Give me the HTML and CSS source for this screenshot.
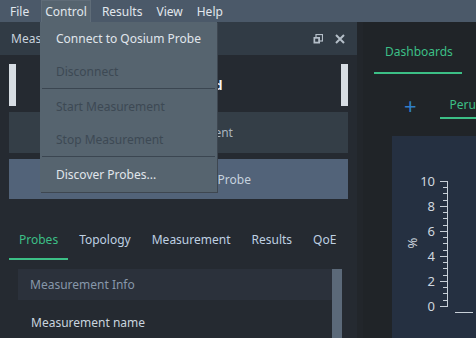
FILE: index.html
```html
<!DOCTYPE html>
<html lang="en">
  <head>
    <meta charset="UTF-8" />
    <title>Qosium Scope</title>
    <link rel="stylesheet" href="styles.css">
  </head>
  <body>
    <div class="menubar">
      <span class="menu-item">File</span>
      <span class="menu-item open">Control</span>
      <span class="menu-item">Results</span>
      <span class="menu-item">View</span>
      <span class="menu-item">Help</span>
    </div>

    <div class="main">
      <!-- Left dock -->
      <div class="dock">
        <div class="dock-title">
          <span class="dock-name">Measurement Control</span>
          <span class="dock-icons">
            <svg width="10" height="10" viewBox="0 0 10 10">
              <rect x="3" y="0.5" width="6.5" height="6.5" fill="none" stroke="#b4bec8" stroke-width="1.2" />
              <rect x="0.5" y="3" width="6.5" height="6.5" fill="#b4bec8" />
              <rect x="2.2" y="4.7" width="3" height="3" fill="#313b45" />
            </svg>
            <svg width="10" height="10" viewBox="0 0 10 10">
              <path d="M1 1 L9 9 M9 1 L1 9" stroke="#b4bec8" stroke-width="2" />
            </svg>
          </span>
        </div>
        <div class="dock-body">
          <div class="status-row">
            <span class="status-bar"></span>
            <span class="status-text">Disconnected</span>
            <span class="status-bar"></span>
          </div>
          <button class="dock-btn">Start Measurement</button>
          <button class="dock-btn primary">Connect to Qosium Probe</button>

          <div class="tabs">
            <span class="tab active">Probes</span>
            <span class="tab">Topology</span>
            <span class="tab">Measurement</span>
            <span class="tab">Results</span>
            <span class="tab">QoE</span>
          </div>
          <div class="tab-page">
            <div class="group">
              <div class="group-head">Measurement Info</div>
              <div class="group-row">Measurement name</div>
            </div>
            <div class="scrollbar"></div>
          </div>
        </div>
      </div>

      <!-- Right area -->
      <div class="workspace">
        <div class="top-tabs">
          <span class="top-tab">Dashboards</span>
        </div>
        <div class="sub-tabs">
          <span class="add-tab">+</span>
          <span class="sub-tab">Peru</span>
        </div>
        <div class="chart">
          <svg width="81" height="202" viewBox="0 0 81 202">
            <g fill="#cfd7df" font-family="Noto Sans, sans-serif" font-size="13" text-anchor="end">
              <text x="43" y="50">10</text>
              <text x="43" y="75">8</text>
              <text x="43" y="100">6</text>
              <text x="43" y="125">4</text>
              <text x="43" y="150">2</text>
              <text x="43" y="175">0</text>
              <text x="0" y="0" text-anchor="middle" transform="translate(25 107) rotate(-90)">%</text>
            </g>
            <g stroke="#c8d0d8" stroke-width="1">
              <path d="M55.5 45 V170.5" />
              <path d="M48 45.5 H56 M48 70.5 H56 M48 95.5 H56 M48 120.5 H56 M48 145.5 H56 M48 170.5 H56" />
              <path d="M51 51.5 H56 M51 57.5 H56 M51 64.5 H56
                       M51 76.5 H56 M51 82.5 H56 M51 89.5 H56
                       M51 101.5 H56 M51 107.5 H56 M51 114.5 H56
                       M51 126.5 H56 M51 132.5 H56 M51 139.5 H56
                       M51 151.5 H56 M51 157.5 H56 M51 164.5 H56" />
              <path d="M63 176.5 H81" />
            </g>
          </svg>
        </div>
      </div>
    </div>

    <!-- Open Control menu -->
    <div class="dropdown">
      <div class="drop-item">Connect to Qosium Probe</div>
      <div class="drop-item disabled">Disconnect</div>
      <div class="drop-sep"></div>
      <div class="drop-item disabled">Start Measurement</div>
      <div class="drop-item disabled">Stop Measurement</div>
      <div class="drop-sep"></div>
      <div class="drop-item">Discover Probes...</div>
    </div>
  </body>
</html>
```

FILE: styles.css
```css
/* Global */
* {
  box-sizing: border-box;
  margin: 0;
  padding: 0;
}
body {
  width: 476px;
  height: 338px;
  overflow: hidden;
  position: relative;
  background: #202428;
  font-family: "Noto Sans", sans-serif;
  font-size: 12px;
  color: #dfe5eb;
}

/* Menu bar */
.menubar {
  height: 22px;
  background: #4b5969;
  display: flex;
  align-items: stretch;
  padding-left: 4px;
}
.menu-item {
  display: flex;
  align-items: center;
  padding: 0 6px;
  margin-right: 2px;
  color: #e1e7ed;
}
.menu-item.open {
  background: #56646f;
  border: 1px solid #5f6c78;
  border-bottom: none;
  padding: 0 3px;
  margin: 0 5px 0 4px;
}

/* Layout */
.main {
  display: flex;
  height: 316px;
}

/* Dock */
.dock {
  width: 360px;
  background: #252a31;
  display: flex;
  flex-direction: column;
  overflow: hidden;
}
.dock-title {
  height: 33px;
  flex-shrink: 0;
  background: #313b45;
  display: flex;
  align-items: center;
  justify-content: space-between;
  padding: 0 12px 0 11px;
  color: #c8d2dc;
}
.dock-icons {
  display: flex;
  gap: 12px;
  align-items: center;
}
.dock-body {
  padding: 9px 9px 0 9px;
  display: flex;
  flex-direction: column;
  flex-shrink: 0;
}
.dock-body > * {
  flex-shrink: 0;
}
.status-row {
  height: 42px;
  display: flex;
  align-items: center;
  justify-content: space-between;
}
.status-bar {
  width: 7px;
  height: 42px;
  background: #d7dde3;
}
.status-text {
  font-weight: bold;
  font-size: 13px;
  color: #f2f4f6;
}
.dock-btn {
  height: 41px;
  margin-top: 6px;
  border: none;
  background: #343e47;
  color: #a9b4bf;
  font-family: inherit;
  font-size: 12px;
}
.dock-btn.primary {
  height: 40px;
  background: #526379;
  color: #c6d2de;
}

/* Inner tabs */
.tabs {
  display: flex;
  margin-top: 22px;
  height: 39px;
}
.tab {
  padding: 10px 10px 0 10px;
  margin-right: 1px;
  color: #bfd0e2;
}
.tab.active {
  color: #3cbf86;
  border-bottom: 2px solid #3cbf86;
}
.tab-page {
  display: flex;
  padding: 9px 0 0 9px;
}
.group {
  width: 314px;
}
.group-head {
  height: 31px;
  background: #2b313b;
  padding: 7px 12px;
  color: #8797aa;
}
.group-row {
  padding: 14px 13px;
  color: #c9d4df;
}
.scrollbar {
  width: 10px;
  height: 80px;
  background: #5b6979;
}

/* Workspace */
.workspace {
  flex: 1;
  display: flex;
  flex-direction: column;
  background: #202428;
  border-left: 6px solid #22262b;
}
.top-tabs {
  height: 52px;
  padding-left: 11px;
  display: flex;
}
.top-tab {
  width: 88px;
  padding: 21px 0 0 11px;
  color: #3cbf86;
  border-bottom: 2px solid #3cbf86;
}
.sub-tabs {
  height: 52px;
  display: flex;
  align-items: flex-start;
}
.add-tab {
  color: #2f7fc9;
  font-size: 22px;
  line-height: 1;
  margin: 20px 0 0 41px;
}
.sub-tab {
  margin: 22px 0 0 23px;
  padding: 0 0 4px 10px;
  flex: 1;
  color: #3cbf86;
  border-bottom: 2px solid #3cbf86;
}
.chart {
  flex: 1;
  margin: 10px 0 0 29px;
  background: #253041;
}
.chart svg {
  display: block;
}

/* Dropdown menu (overlays the dock) */
.dropdown {
  position: absolute;
  left: 40px;
  top: 22px;
  width: 177px;
  background: #56646f;
  box-shadow: 1px 1px 0 #3e4751;
  padding-bottom: 1px;
}
.drop-item {
  height: 33px;
  line-height: 33px;
  padding-left: 16px;
  color: #e0e6ec;
}
.drop-item.disabled {
  color: #3d4954;
}
.drop-sep {
  height: 1px;
  margin: 0 2px 1px 2px;
  background: #3b4651;
}
```
